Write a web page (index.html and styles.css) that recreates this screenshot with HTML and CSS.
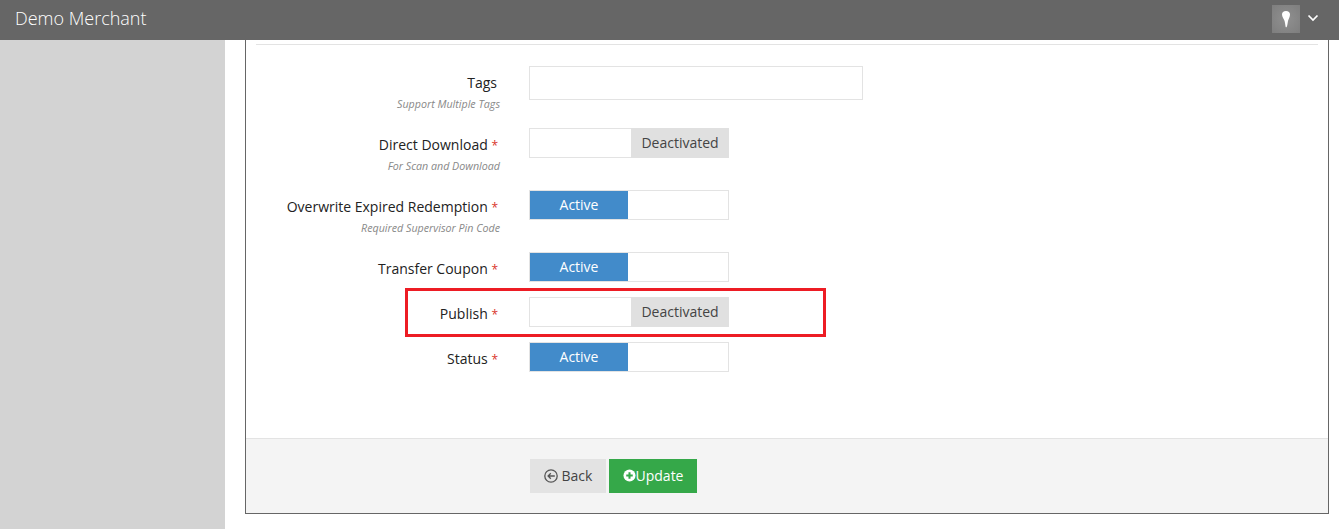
FILE: index.html
```html
<!DOCTYPE html>
<html lang="en">
<head>
<meta charset="utf-8">
<title>Demo Merchant</title>
<link rel="stylesheet" href="styles.css">
</head>
<body>
<header class="topbar">
  <span class="brand">Demo Merchant</span>
  <div class="user">
    <span class="avatar">
      <svg viewBox="0 0 28 28" width="28" height="28"><path d="M10 9.500c0-2.200 1.500-3.500 4-3.500s4 1.300 4 3.500c0 2.500-1.500 4.500-2 6.500-.3 1.500-.5 4-1.300 6-.4.6-.9.3-1.100-.3-.4-2-.5-3.700-1-5.700-.6-2-2.600-4-2.600-6.500z" fill="#fff"/></svg>
    </span>
    <svg class="chevron" viewBox="0 0 12 8" width="12" height="8"><path d="M1.500 1.500 6 6l4.500-4.500" fill="none" stroke="#fff" stroke-width="1.700"/></svg>
  </div>
</header>
<div class="page">
  <aside class="sidebar"></aside>
  <main class="content">
    <section class="panel">
      <div class="panel-body">
        <hr class="rule">
        <div class="row row-tall">
          <div class="label-col">
            <label class="label">Tags</label>
            <small class="hint">Support Multiple Tags</small>
          </div>
          <input class="text-input" type="text">
        </div>
        <div class="row row-tall">
          <div class="label-col">
            <label class="label">Direct Download <i class="req">*</i></label>
            <small class="hint">For Scan and Download</small>
          </div>
          <div class="toggle"><span class="blank"></span><span class="off">Deactivated</span></div>
        </div>
        <div class="row row-tall">
          <div class="label-col">
            <label class="label">Overwrite Expired Redemption <i class="req">*</i></label>
            <small class="hint">Required Supervisor Pin Code</small>
          </div>
          <div class="toggle"><span class="on">Active</span><span class="blank"></span></div>
        </div>
        <div class="row">
          <div class="label-col">
            <label class="label">Transfer Coupon <i class="req">*</i></label>
          </div>
          <div class="toggle"><span class="on">Active</span><span class="blank"></span></div>
        </div>
        <div class="row row-marked">
          <div class="label-col">
            <label class="label">Publish <i class="req">*</i></label>
          </div>
          <div class="toggle"><span class="blank"></span><span class="off">Deactivated</span></div>
          <div class="highlight"></div>
        </div>
        <div class="row">
          <div class="label-col">
            <label class="label">Status <i class="req">*</i></label>
          </div>
          <div class="toggle"><span class="on">Active</span><span class="blank"></span></div>
        </div>
      </div>
      <footer class="panel-footer">
        <button class="btn btn-back" type="button">
          <svg viewBox="0 0 14 14" width="14" height="14"><circle cx="7" cy="7" r="6.200" fill="none" stroke="#555" stroke-width="1.300"/><path d="M10.800 7H4.200M6.800 4.300 4.100 7l2.700 2.700" fill="none" stroke="#555" stroke-width="1.300"/></svg>
          <span>Back</span>
        </button>
        <button class="btn btn-update" type="button">
          <svg viewBox="0 0 14 14" width="13" height="13"><circle cx="7" cy="7" r="6.500" fill="#fff"/><path d="M7 3.500v7M3.500 7h7" stroke="#35a849" stroke-width="2.200"/></svg>
          <span>Update</span>
        </button>
      </footer>
    </section>
  </main>
</div>
</body>
</html>
```
FILE: styles.css
```css
* {
  box-sizing: border-box;
}

html,
body {
  height: 100%;
  margin: 0;
  overflow: hidden;
}

body {
  background: #fff;
  color: #222;
  font-family: "Open Sans", "Liberation Sans", sans-serif;
  font-size: 14px;
}

.topbar {
  display: flex;
  align-items: center;
  justify-content: space-between;
  height: 40px;
  padding: 0 20px 3px 15px;
  background: #666;
  color: #fff;
}

.brand {
  margin-top: -2px;
  font-size: 18px;
  font-weight: 300;
}

.user {
  display: flex;
  align-items: flex-start;
  gap: 7px;
  margin-top: 1px;
}

.avatar {
  display: block;
  width: 28px;
  height: 28px;
  background: radial-gradient(circle, #909090 0%, #7e7e7e 100%);
}

.chevron {
  margin-top: 9px;
}

.page {
  display: flex;
  height: 489px;
}

.sidebar {
  flex: 0 0 225px;
  background: #d3d3d3;
}

.content {
  flex: 1;
  padding: 0 10px 15px 20px;
}

.panel {
  display: flex;
  flex-direction: column;
  height: 100%;
  border: 1px solid #666;
  border-top: 0;
}

.panel-body {
  flex: 1;
  padding: 4px 10px 0;
}

.rule {
  height: 1px;
  margin: 0 0 21px;
  border: 0;
  background: #e3e3e3;
}

.row {
  position: relative;
  display: flex;
  align-items: flex-start;
  height: 45px;
}

.row-tall {
  height: 62px;
}

.label-col {
  display: flex;
  flex-direction: column;
  align-items: flex-end;
  flex: 0 0 273px;
  padding: 7px 29px 0 0;
  text-align: right;
}

.label {
  margin-right: 3px;
  color: #222;
  font-size: 14px;
  line-height: 19px;
  white-space: nowrap;
}

.req {
  margin-right: -1px;
  color: #d9342b;
  font-size: 12px;
  font-style: normal;
  line-height: 0;
}

.hint {
  margin-top: 6px;
  color: #888;
  font-size: 10.700px;
  font-style: italic;
  line-height: 13px;
}

.text-input {
  display: block;
  width: 334px;
  height: 34px;
  border: 1px solid #e3e3e3;
  background: #fff;
}

.toggle {
  display: flex;
  width: 200px;
  height: 30px;
  border: 1px solid #e3e3e3;
  background: #fff;
}

.toggle span {
  display: block;
  font-size: 14px;
}

.blank {
  flex: 1;
}

.on {
  flex: 0 0 98px;
  background: #428bca;
  color: #fff;
  line-height: 28px;
  text-align: center;
}

.off {
  flex: 0 0 98px;
  margin: -1px -1px -1px 0;
  background: #e0e0e0;
  color: #444;
  line-height: 29px;
  text-align: center;
}

.highlight {
  position: absolute;
  left: 149px;
  top: -9px;
  width: 421px;
  height: 49px;
  border: 3px solid #ed1c24;
  pointer-events: none;
}

.panel-footer {
  display: flex;
  gap: 3px;
  height: 75px;
  padding: 20px 0 0 284px;
  border-top: 1px solid #e3e3e3;
  background: #f4f4f4;
}

.btn {
  display: inline-flex;
  align-items: center;
  justify-content: center;
  height: 34px;
  padding: 0 0 1px;
  border: 0;
  font-family: inherit;
  font-size: 14px;
}

.btn-back {
  gap: 4px;
  width: 76px;
  background: #e3e3e3;
  color: #444;
}

.btn-update {
  width: 88px;
  background: #35a849;
  color: #fff;
}
```
